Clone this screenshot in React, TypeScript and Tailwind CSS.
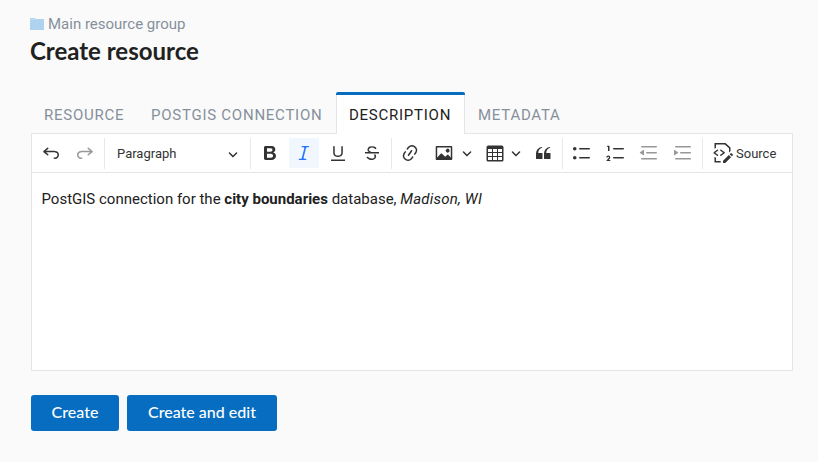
import type { ReactNode } from "react";

const paths = {
  undo: "m5.042 9.367 2.189 1.837a.75.75 0 0 1-.965 1.149l-3.788-3.18a.747.747 0 0 1-.21-.284.75.75 0 0 1 .17-.945L6.23 4.762a.75.75 0 1 1 .964 1.15L4.863 7.866h8.917A.75.75 0 0 1 14 7.9a4 4 0 1 1-1.477 7.718l.344-1.489a2.5 2.5 0 1 0 1.094-4.73l.008-.032H5.042z",
  redo: "m14.958 9.367-2.189 1.837a.75.75 0 0 0 .965 1.149l3.788-3.18a.747.747 0 0 0 .21-.284.75.75 0 0 0-.17-.945L13.77 4.762a.75.75 0 1 0-.964 1.15l2.331 1.955H6.22A.75.75 0 0 0 6 7.9a4 4 0 1 0 1.477 7.718l-.344-1.489A2.5 2.5 0 1 1 6.039 9.4l-.008-.032h8.927z",
  bold: "M10.187 17H5.773c-.637 0-1.092-.138-1.364-.415-.273-.277-.409-.718-.409-1.323V4.738c0-.617.14-1.062.419-1.332.279-.27.73-.406 1.354-.406h4.68c.69 0 1.288.041 1.793.124.506.083.96.242 1.36.478.341.197.644.447.906.75a3.262 3.262 0 0 1 .808 2.162c0 1.401-.722 2.426-2.167 3.075C15.05 10.175 16 11.315 16 13.01a3.756 3.756 0 0 1-2.296 3.504 6.1 6.1 0 0 1-1.517.377c-.571.073-1.238.11-2 .11zm-.217-6.217H7v4.087h3.069c1.977 0 2.965-.69 2.965-2.072 0-.707-.256-1.22-.768-1.537-.512-.319-1.277-.478-2.296-.478zM7 5.13v3.619h2.606c.729 0 1.292-.067 1.69-.2a1.6 1.6 0 0 0 .91-.765c.165-.267.247-.566.247-.897 0-.707-.26-1.176-.778-1.409-.519-.232-1.31-.348-2.375-.348H7z",
  italic: "m9.586 14.633.021.004c-.036.335.095.655.393.962.082.083.173.15.274.201h1.474a.6.6 0 1 1 0 1.2H5.304a.6.6 0 0 1 0-1.2h1.15c.474-.07.809-.182 1.005-.334.157-.122.291-.32.404-.597l2.416-9.55a1.053 1.053 0 0 0-.281-.823 1.12 1.12 0 0 0-.442-.296H8.15a.6.6 0 0 1 0-1.2h6.443a.6.6 0 1 1 0 1.2h-1.195c-.376.056-.65.155-.823.296-.215.175-.423.439-.623.79l-2.366 9.347z",
  underline: "M3 18v-1.5h14V18H3zm2.2-8V3.6c0-.4.4-.6.8-.6.3 0 .7.2.7.6v6.2c0 2 1.3 2.8 3.2 2.8 1.9 0 3.4-.9 3.4-2.9V3.6c0-.3.4-.5.8-.5.3 0 .7.2.7.5V10c0 2.7-2.2 4-4.9 4-2.6 0-4.7-1.2-4.7-4z",
  strike: "M7 16.4c-.8-.4-1.5-.9-2.2-1.5a.6.6 0 0 1-.2-.5l.3-.6h1c1 1.2 2.1 1.7 3.7 1.7 1 0 1.8-.3 2.3-.6.6-.4.6-1.2.6-1.3.2-1.2-.9-2.1-.9-2.1h2.1c.3.7.4 1.2.4 1.7v.8l-.6 1.2c-.6.8-1.1 1-1.6 1.2a6 6 0 0 1-2.4.6c-1 0-1.8-.3-2.5-.6zM6.8 9 6 8.3c-.4-.5-.5-.8-.5-1.6 0-.7.1-1.3.5-1.8.4-.6 1-1 1.6-1.3a6.3 6.3 0 0 1 4.7 0 4 4 0 0 1 1.7 1l.3.7c0 .1.2.4-.2.7-.4.2-.9.1-1 0a3 3 0 0 0-1.2-1c-.4-.2-1-.3-2-.4-.7 0-1.4.2-2 .6-.8.6-1 .8-1 1.5 0 .8.5 1 1.2 1.5.6.4 1.1.7 1.9 1H6.8zM3 10.5V9h14v1.5z",
  link: "m11.077 15 .991-1.416a.75.75 0 1 1 1.229.86l-1.148 1.64a.748.748 0 0 1-.217.206 5.251 5.251 0 0 1-8.503-5.955.741.741 0 0 1 .12-.274l1.147-1.639a.75.75 0 1 1 1.228.86L4.933 10.7l.006.003a3.75 3.75 0 0 0 6.132 4.294l.006.004zm5.494-5.335a.748.748 0 0 1-.12.274l-1.147 1.639a.75.75 0 1 1-1.228-.86l.86-1.23a3.75 3.75 0 0 0-6.144-4.301l-.86 1.229a.75.75 0 0 1-1.229-.86l1.148-1.64a.748.748 0 0 1 .217-.206 5.251 5.251 0 0 1 8.503 5.955zm-4.563-2.532a.75.75 0 0 1 .184 1.045l-3.155 4.505a.75.75 0 1 1-1.229-.86l3.155-4.506a.75.75 0 0 1 1.045-.184z",
  image: "M6.91 10.54c.26-.23.64-.21.88.03l3.36 3.14 2.23-2.06a.64.64 0 0 1 .87 0l2.52 2.97V4.5H3.2v10.12l3.71-4.08zm10.27-7.51c.6 0 1.09.47 1.09 1.05v11.84c0 .59-.49 1.06-1.09 1.06H2.79c-.6 0-1.09-.47-1.09-1.06V4.08c0-.58.49-1.05 1.1-1.05h14.38zm-5.22 5.56a1.96 1.96 0 1 1 3.4-1.96 1.96 1.96 0 0 1-3.4 1.96z",
  table: "M3 6v3h4V6H3zm0 4v3h4v-3H3zm0 4v3h4v-3H3zm5 3h4v-3H8v3zm5 0h4v-3h-4v3zm4-4v-3h-4v3h4zm0-4V6h-4v3h4zm1.5 8a1.5 1.5 0 0 1-1.5 1.5H3A1.5 1.5 0 0 1 1.5 17V4c.222-.863 1.068-1.5 2-1.5h13c.932 0 1.778.637 2 1.5v13zM12 13v-3H8v3h4zm0-4V6H8v3h4z",
  quote: "M3 10.423a6.5 6.5 0 0 1 6.056-6.408l.038.67C6.448 5.423 5.354 7.663 5.22 10H9c.552 0 .5.432.5.986v4.511c0 .554-.448.503-1 .503h-5c-.552 0-.5-.449-.5-1.003v-4.574zm8 0a6.5 6.5 0 0 1 6.056-6.408l.038.67c-2.646.739-3.74 2.979-3.873 5.315H17c.552 0 .5.432.5.986v4.511c0 .554-.448.503-1 .503h-5c-.552 0-.5-.449-.5-1.003v-4.574z",
  bullets: "M7 5.75c0 .414.336.75.75.75h9.5a.75.75 0 1 0 0-1.5h-9.5a.75.75 0 0 0-.75.75zm-6 0C1 4.784 1.777 4 2.75 4c.966 0 1.75.777 1.75 1.75 0 .966-.777 1.75-1.75 1.75C1.784 7.5 1 6.723 1 5.75zm6 9c0 .414.336.75.75.75h9.5a.75.75 0 1 0 0-1.5h-9.5a.75.75 0 0 0-.75.75zm-6 0c0-.966.777-1.75 1.75-1.75.966 0 1.75.777 1.75 1.75 0 .966-.777 1.75-1.75 1.75-.966 0-1.75-.777-1.75-1.75z",
  numbers: "M7 5.75c0 .414.336.75.75.75h9.5a.75.75 0 1 0 0-1.5h-9.5a.75.75 0 0 0-.75.75zM3.5 3v5H2V3.7H1v-1h2.5V3zM.343 17.857l2.59-3.257H2.92a.6.6 0 1 0-1.04 0H.302a2 2 0 1 1 3.995 0h-.001c-.048.405-.16.734-.333.988-.175.254-.59.692-1.244 1.312H4.3v1h-4l.043-.043zM7 14.75a.75.75 0 0 1 .75-.75h9.5a.75.75 0 1 1 0 1.5h-9.5a.75.75 0 0 1-.75-.75z",
  outdent: "M2 3.75c0 .414.336.75.75.75h14.5a.75.75 0 1 0 0-1.5H2.75a.75.75 0 0 0-.75.75zm5 6c0 .414.336.75.75.75h9.5a.75.75 0 1 0 0-1.5h-9.5a.75.75 0 0 0-.75.75zM2.75 16.5h14.5a.75.75 0 1 0 0-1.5H2.75a.75.75 0 1 0 0 1.5zm1.618-9.55L.98 9.358a.4.4 0 0 0 .013.661l3.39 2.207A.4.4 0 0 0 5 11.892V7.275a.4.4 0 0 0-.632-.326z",
  indent: "M2 3.75c0 .414.336.75.75.75h14.5a.75.75 0 1 0 0-1.5H2.75a.75.75 0 0 0-.75.75zm5 6c0 .414.336.75.75.75h9.5a.75.75 0 1 0 0-1.5h-9.5a.75.75 0 0 0-.75.75zM2.75 16.5h14.5a.75.75 0 1 0 0-1.5H2.75a.75.75 0 1 0 0 1.5zM1.632 6.95 5.02 9.358a.4.4 0 0 1-.013.661l-3.39 2.207A.4.4 0 0 1 1 11.892V7.275a.4.4 0 0 1 .632-.326z",
};

type IconName = keyof typeof paths;

function Icon({ name }: { name: IconName }) {
  return (
    <svg viewBox="0 0 20 20" className="size-5 shrink-0" fill="currentColor">
      <path d={paths[name]} />
    </svg>
  );
}

function Chevron() {
  return (
    <svg viewBox="0 0 10 10" className="size-[10px] shrink-0" fill="currentColor">
      <path d="M.941 4.523a.75.75 0 1 1 1.06-1.06l3.006 3.005 3.005-3.005a.75.75 0 1 1 1.06 1.06l-3.549 3.55a.75.75 0 0 1-1.168-.136L.941 4.523z" />
    </svg>
  );
}

function SourceIcon() {
  return (
    <svg viewBox="0 0 20 20" className="size-5 shrink-0" fill="currentColor">
      <path d="m12.5 0 5 4.5v3.5L16 9.428v-4.22L11.774 1.516 3 1.5v3.25l-1.5 1V0zM1.5 13.75l1.5 1V18h4.685v1.5H1.5z" />
      <path d="M4.06 6.64a.75.75 0 0 1 .958 1.15l-.085.07L2.29 9.75l2.646 1.89c.302.216.4.62.232.951l-.058.095a.75.75 0 0 1-.951.232l-.095-.058-3.5-2.5V9.14l3.496-2.5zm4.194 6.22a.75.75 0 0 1-.958-1.149l.085-.07 2.643-1.89-2.646-1.89a.75.75 0 0 1-.232-.952l.058-.095a.75.75 0 0 1 .95-.232l.096.058 3.5 2.5v1.22l-3.496 2.5zm7.644-.836 2.122 2.122-5.825 5.809-2.125-.005.003-2.116zm2.539-1.847 1.414 1.414a.5.5 0 0 1 0 .707l-1.06 1.06-2.125-2.12 1.064-1.061a.5.5 0 0 1 .707 0z" />
    </svg>
  );
}

function Tool({ name, state }: { name: IconName; state?: "on" | "off" }) {
  return (
    <button
      aria-label={name}
      className={
        "flex size-[30px] shrink-0 items-center justify-center " +
        (state === "on" ? "bg-[#f0f7ff] text-[#2977ff]" : state === "off" ? "opacity-50" : "")
      }
    >
      <Icon name={name} />
    </button>
  );
}

function Group({ children, className }: { children: ReactNode; className: string }) {
  return <div className={"flex h-[31px] shrink-0 border-[#e8e8e8] " + className}>{children}</div>;
}

function Tab({ children, className }: { children: ReactNode; className: string }) {
  return <div className={"flex h-[41px] shrink-0 items-center whitespace-nowrap text-[#86909a] " + className}>{children}</div>;
}

export default function App() {
  return (
    <div className="h-[462px] w-[818px] overflow-hidden bg-[#fafafa] font-['Roboto',sans-serif] text-[#212121]">
      <header className="h-[92px] pt-[14px] pl-[30px]">
        <div className="flex h-5 items-center gap-1 text-[15px] leading-5 text-[#86909a]">
          <svg viewBox="0 0 14 12" className="h-3 w-[14px]" fill="#afd2ee">
            <path d="M0 0h5l1 1h8v11H0z" />
            <path d="M0 1.5h5.5l1-.5" stroke="#d4e7f5" strokeWidth=".5" fill="none" />
          </svg>
          <span>Main resource group</span>
        </div>
        <h1 className="h-9 font-['Lato',sans-serif] text-[24px] leading-[33px] font-bold">Create resource</h1>
      </header>

      <nav className="flex h-[41px] pl-[31px] text-[15px] tracking-[0.75px]">
        <Tab className="w-[107px] pt-[5px] pl-[13px]">RESOURCE</Tab>
        <Tab className="w-[198px] pt-[5px] pl-[13px]">POSTGIS CONNECTION</Tab>
        <div className="relative z-10 h-[42px] w-[129px] shrink-0 rounded-t-[2px] border-x border-[#e5e5e5] bg-white">
          <div className="-mx-px h-[3px] rounded-t-[2px] bg-[#076dc0]" />
          <div className="flex h-[38px] items-center pt-[2px] pl-3 text-[#212121]">DESCRIPTION</div>
        </div>
        <Tab className="pt-[5px] pl-[13px]">METADATA</Tab>
      </nav>

      <main className="ml-[31px] flex h-[238px] w-[762px] flex-col border border-[#e5e5e5] bg-white">
        <div className="flex h-[39px] shrink-0 border-b border-[#e5e5e5] pt-1 pl-1 text-[#333]">
          <Group className="w-[69px] gap-[4px] border-r">
            <Tool name="undo" />
            <Tool name="redo" state="off" />
          </Group>
          <Group className="w-[146px] items-center justify-between border-r pr-3 pl-3">
            <span className="text-[13px]">Paragraph</span>
            <Chevron />
          </Group>
          <Group className="w-[141px] gap-1 border-r pl-1">
            <Tool name="bold" />
            <Tool name="italic" state="on" />
            <Tool name="underline" />
            <Tool name="strike" />
          </Group>
          <Group className="w-[171px] border-r pl-[3px]">
            <Tool name="link" />
            <button className="ml-[9px] flex h-[30px] w-[38px] items-center justify-between">
              <Icon name="image" />
              <Chevron />
            </button>
            <button className="ml-[13px] flex h-[30px] w-[36px] items-center justify-between">
              <Icon name="table" />
              <Chevron />
            </button>
            <div className="ml-[7px]">
              <Tool name="quote" />
            </div>
          </Group>
          <Group className="w-[140px] gap-[3.7px] border-r pl-[4px]">
            <Tool name="bullets" />
            <Tool name="numbers" />
            <Tool name="outdent" state="off" />
            <Tool name="indent" state="off" />
          </Group>
          <button className="ml-[10px] flex h-[30px] items-center gap-[3px] text-[13px]">
            <SourceIcon />
            <span className="pt-px">Source</span>
          </button>
        </div>
        <p className="pt-[15px] pl-[9.5px] text-[15px] leading-[22px]">
          PostGIS connection for the <strong className="font-bold">city boundaries</strong> database,{" "}
          <em className="tracking-[0.2px]">Madison, WI</em>
        </p>
      </main>

      <footer className="flex gap-2 pt-6 pl-[31px] font-['Lato',sans-serif] text-[16px] text-white">
        <button className="h-9 w-[88px] rounded-[3px] bg-[#076dc0] pb-[2px] font-medium">Create</button>
        <button className="h-9 w-[150px] rounded-[3px] bg-[#076dc0] pb-[2px] font-medium">Create and edit</button>
      </footer>
    </div>
  );
}
